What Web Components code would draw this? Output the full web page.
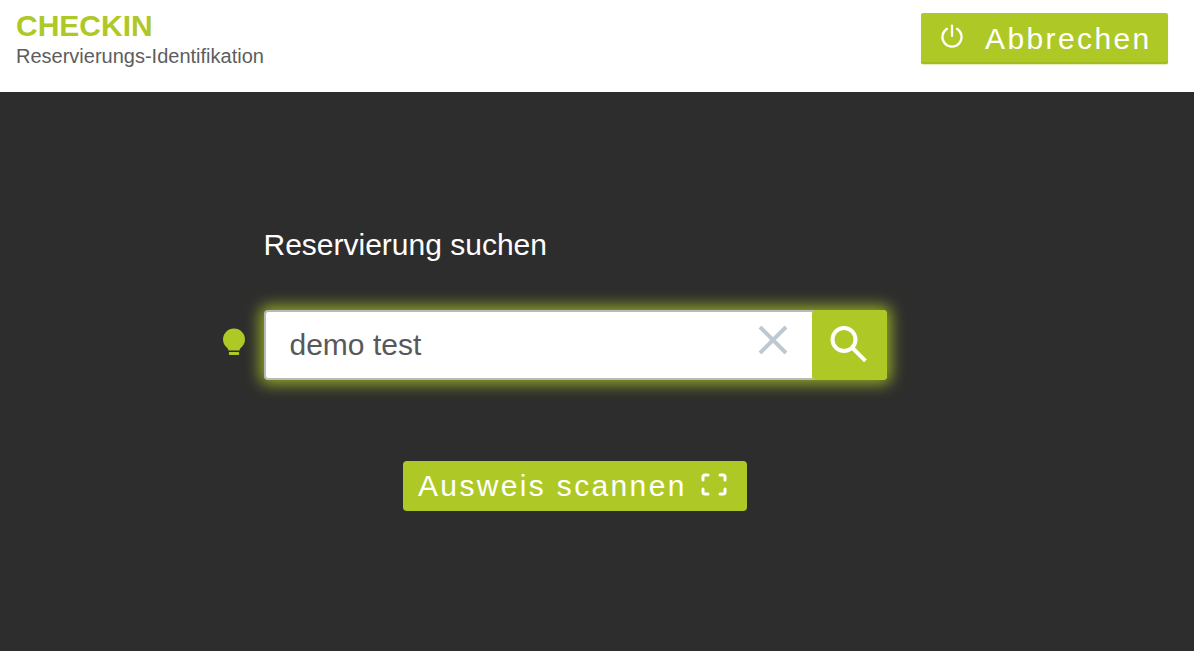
<!DOCTYPE html>
<html lang="de"><head><meta charset="utf-8"><title>Checkin</title>
<style>
html,body{margin:0;height:100%;background:#2d2d2d;font-family:"Liberation Sans",Arial,sans-serif}
checkin-app{display:block;height:651px;overflow:hidden}
</style></head><body>
<checkin-app>
 <app-header>
  <span slot="title">CHECKIN</span>
  <span slot="sub">Reservierungs-Identifikation</span>
  <action-button slot="action" size="large"><svg slot="icon" width="26" height="26" viewBox="0 0 26 26" fill="none" stroke="#fff" stroke-width="2.2" stroke-linecap="round"><path d="M13 2.500V13"/><path d="M8 5.800a9.600 9.600 0 1 0 10 0"/></svg>Abbrechen</action-button>
 </app-header>
 <search-panel>
  <span slot="label">Reservierung suchen</span>
  <search-box value="demo test"></search-box>
  <action-button slot="scan" size="small">Ausweis scannen<svg slot="trail" width="26" height="23" viewBox="0 0 26 23" fill="none" stroke="#fff" stroke-width="3" stroke-linecap="round" stroke-linejoin="round"><path d="M2 7V4a2 2 0 0 1 2-2h3M19 2h3a2 2 0 0 1 2 2v3M24 16v3a2 2 0 0 1-2 2h-3M7 21H4a2 2 0 0 1-2-2v-3"/></svg></action-button>
 </search-panel>
</checkin-app>
<script>
function def(name,css,html,extra){
  customElements.define(name,class extends HTMLElement{
    constructor(){super();const r=this.attachShadow({mode:"open"});r.innerHTML="<style>"+css+"</style>"+html;}
    connectedCallback(){if(extra)extra(this)}
  });
}
def("app-header",`
 :host{display:flex;justify-content:space-between;align-items:flex-start;height:92px;box-sizing:border-box;background:#fff;padding:13px 26px 0 16px}
 .t{font-size:30px;font-weight:700;color:#aec926;line-height:27px;margin-top:-1px}
 .s{font-size:20px;color:#5d5d5d;line-height:23px;margin-top:6px}
`,`<div><div class="t"><slot name="title"></slot></div><div class="s"><slot name="sub"></slot></div></div><slot name="action"></slot>`);
def("action-button",`
 :host{display:inline-flex;align-items:center;box-sizing:border-box;background:#aec926;color:#fff;white-space:nowrap}
 :host([size=large]){width:247px;height:51px;padding:0 16px 0 18px;font-size:30px;letter-spacing:2.400px;border-radius:2px;box-shadow:inset 0 -2px 0 #a3bc20,0 1px 1px rgba(175,202,37,.35)}
 :host([size=small]){width:344px;height:50px;padding:0 0 0 15.500px;font-size:30px;letter-spacing:2.350px;border-radius:4px}
 ::slotted([slot=icon]){margin-right:20px;margin-top:-6px}
 ::slotted([slot=trail]){margin-left:14px;margin-top:-3px}
`,`<slot name="icon"></slot><slot></slot><slot name="trail"></slot>`);
def("search-box",`
 :host{display:flex;width:623px;height:70px;box-sizing:border-box;background:#fff;border-radius:4px;border:solid #b9b9b9;border-width:2px 0 2px 2px;box-shadow:0 0 15px 4px rgba(175,202,37,.8);color:#555}
 .v{flex:1;padding-left:23.500px;font-size:30px;line-height:66px;color:#58585a}
 .x{width:48px;display:flex;align-items:center;padding-bottom:10px;box-sizing:border-box;margin-right:15px;justify-content:center}
 .go{width:75px;height:70px;margin:-2px 0;background:#aec926;border-radius:4px;display:flex;align-items:center;justify-content:center}
 .go svg{margin:-3px 3px 0 0}
`,`<div class="v"></div>
 <div class="x"><svg width="32" height="32" viewBox="0 0 32 32" stroke="#bcc8d2" stroke-width="4" stroke-linecap="butt"><path d="M3 3L29 29M29 3L3 29"/></svg></div>
 <div class="go"><svg width="38" height="38" viewBox="0 0 38 38" fill="none" stroke="#fff" stroke-width="4"><circle cx="15" cy="14.500" r="11.500"/><path d="M23.500 23L35 34.500" stroke-linecap="square"/></svg></div>`,
 el=>{el.shadowRoot.querySelector(".v").textContent=el.getAttribute("value")});
def("search-panel",`
 :host{display:block;padding:134px 0 0 220px}
 .l{font-size:30px;line-height:38px;color:#fff;margin-left:43.500px}
 .r{display:flex;align-items:center;margin-top:46px}
 .b{width:44px;flex:none;padding-bottom:6px;box-sizing:border-box}
 .b svg{display:block;margin-left:1px}
 .s{width:623px;margin:81px 0 0 43px;display:flex;justify-content:center}
`,`<div class="l"><slot name="label"></slot></div>
 <div class="r"><div class="b"><svg width="26" height="30" viewBox="0 0 26 30" fill="#aec926"><path d="M13 1.500a11 11 0 0 0-11 11c0 4 2.200 6.500 4 8.300.8.800 1.400 1.700 1.400 2.700h11.200c0-1 .6-1.900 1.400-2.700 1.800-1.800 4-4.300 4-8.300a11 11 0 0 0-11-11z"/><rect x="7.800" y="25" width="10.400" height="3" rx="1"/></svg></div><slot></slot></div>
 <div class="s"><slot name="scan"></slot></div>`);
def("checkin-app",`:host{display:block}`,`<slot></slot>`);
</script>
</body></html>
